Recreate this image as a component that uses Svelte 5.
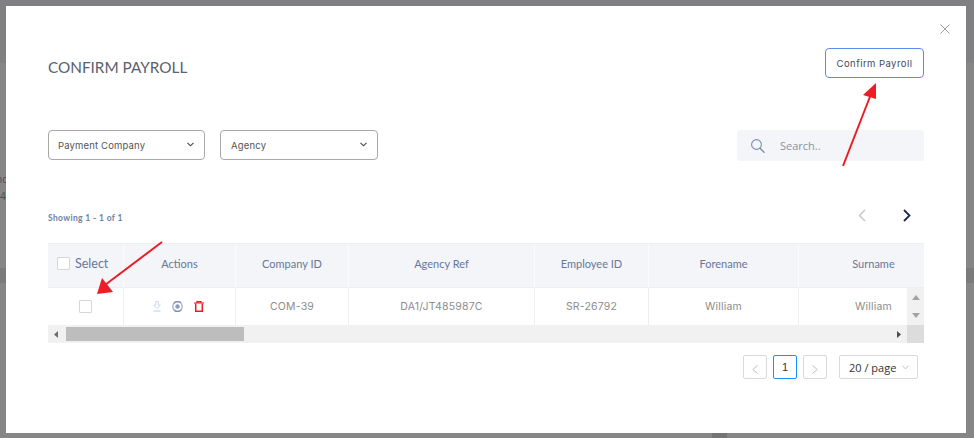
<script>
  const columns = [
    { label: 'Actions', width: 112 },
    { label: 'Company ID', width: 113, value: 'COM-39' },
    { label: 'Agency Ref', width: 186, value: 'DA1/JT485987C' },
    { label: 'Employee ID', width: 114, value: 'SR-26792' },
    { label: 'Forename', width: 150, value: 'William' },
    { label: 'Surname', width: 150, value: 'William' },
  ];
</script>

<div class="backdrop">
  <span class="peek one">nc</span>
  <span class="peek two">4</span>
  <i class="chip"></i>

  <div class="modal">
    <button class="close" aria-label="Close">
      <svg width="10" height="10" viewBox="0 0 10 10"><path d="M.5.5l9 9M9.500.5l-9 9" stroke="#9a9da3" fill="none" /></svg>
    </button>

    <header class="head">
      <h1>CONFIRM PAYROLL</h1>
      <button class="confirm">Confirm Payroll</button>
    </header>

    <div class="filters">
      <div class="select first">
        <span>Payment Company</span>
        <svg width="7" height="5" viewBox="0 0 7 5"><path d="M.5.8l3 3 3-3" stroke="#444" stroke-width="1.100" fill="none" /></svg>
      </div>
      <div class="select">
        <span>Agency</span>
        <svg width="7" height="5" viewBox="0 0 7 5"><path d="M.5.8l3 3 3-3" stroke="#444" stroke-width="1.100" fill="none" /></svg>
      </div>
      <div class="search">
        <svg width="14" height="14" viewBox="0 0 14 14"><circle cx="5.500" cy="5.500" r="4.900" stroke="#7d8fb0" stroke-width="1.100" fill="none" /><path d="M9 9.200l4.500 4.500" stroke="#7d8fb0" stroke-width="1.400" fill="none" /></svg>
        <span>Search..</span>
      </div>
    </div>

    <div class="showing">
      <span>Showing 1 - 1 of 1</span>
      <div class="nav">
        <svg width="8" height="13" viewBox="0 0 8 13"><path d="M7 1L1.500 6.500 7 12" stroke="#c3c8d0" stroke-width="1.500" fill="none" /></svg>
        <svg width="8" height="13" viewBox="0 0 8 13"><path d="M1 1l5.500 5.500L1 12" stroke="#1f2b45" stroke-width="1.800" fill="none" /></svg>
      </div>
    </div>

    <div class="table">
      <div class="row thead">
        <div class="cell select-col">
          <i class="check"></i>
          <span>Select</span>
        </div>
        {#each columns as c}
          <div class="cell" style="width: {c.width}px">{c.label}</div>
        {/each}
      </div>
      <div class="row tbody">
        <div class="cell select-col center"><i class="check"></i></div>
        {#each columns as c}
          <div class="cell" style="width: {c.width}px">
            {#if c.value}
              {c.value}
            {:else}
              <div class="actions">
                <svg width="8" height="11" viewBox="0 0 8 11">
                  <path d="M2.700 .5h2.600v3.500h2L4 7.500.7 4h2z" stroke="#cfd3e6" stroke-width=".9" fill="none" />
                  <path d="M.5 10h7" stroke="#cfd3e6" stroke-width="1.200" />
                </svg>
                <svg width="11" height="11" viewBox="0 0 11 11">
                  <circle cx="5.500" cy="5.500" r="4.700" stroke="#a4add0" stroke-width="1.300" fill="none" />
                  <path d="M1.500 2.500A5 5 0 0 1 9 1.800M9.500 8.500A5 5 0 0 1 2 9.200" stroke="#7f8cb5" stroke-width="1.200" fill="none" />
                  <circle cx="5.500" cy="5.500" r="2.200" fill="#8f9bc0" />
                </svg>
                <svg width="10" height="11" viewBox="0 0 10 11">
                  <path d="M0 2h10M3 1.700V.6h4v1.100" stroke="#f01a1f" stroke-width="1.200" fill="none" />
                  <path d="M1.700 2.500v7.800h6.600V2.500" stroke="#f01a1f" stroke-width="1.500" fill="none" />
                </svg>
              </div>
            {/if}
          </div>
        {/each}
        <div class="vbar">
          <svg width="8" height="5" viewBox="0 0 8 5"><path d="M0 5l4-5 4 5z" fill="#a3a3a3" /></svg>
          <svg width="8" height="5" viewBox="0 0 8 5"><path d="M0 0l4 5 4-5z" fill="#a3a3a3" /></svg>
        </div>
      </div>
      <div class="hbar">
        <svg class="arrow" width="4" height="7" viewBox="0 0 4 7"><path d="M4 0L0 3.500 4 7z" fill="#6e6e6e" /></svg>
        <div class="thumb"></div>
        <svg class="arrow right" width="4" height="7" viewBox="0 0 4 7"><path d="M0 0l4 3.500L0 7z" fill="#4d4d4d" /></svg>
        <div class="corner"></div>
      </div>
    </div>

    <div class="pager">
      <button class="page" aria-label="Previous">
        <svg width="6" height="9" viewBox="0 0 6 9"><path d="M5.500.5L.8 4.500l4.700 4" stroke="#bdbdbd" fill="none" /></svg>
      </button>
      <button class="page active">1</button>
      <button class="page" aria-label="Next">
        <svg width="6" height="9" viewBox="0 0 6 9"><path d="M.5.5l4.700 4-4.700 4" stroke="#bdbdbd" fill="none" /></svg>
      </button>
      <div class="size">
        <span>20 / page</span>
        <svg width="7" height="5" viewBox="0 0 7 5"><path d="M.5.500l3 3.500 3-3.500" stroke="#c4c4c4" fill="none" /></svg>
      </div>
    </div>

    <svg class="marks" width="960" height="427" viewBox="0 0 960 427">
      <path d="M837 160l28-72" stroke="#ee1c25" stroke-width="2" fill="none" />
      <path d="M870 77l-13 12 13 4z" fill="#ee1c25" />
      <path d="M156 236l-57 43" stroke="#ee1c25" stroke-width="2" fill="none" />
      <path d="M91 288l16-2-11-14z" fill="#ee1c25" />
    </svg>
  </div>
</div>

<style>
  :global(body) {
    margin: 0;
  }
  .backdrop {
    position: relative;
    width: 974px;
    height: 438px;
    overflow: hidden;
    background: linear-gradient(#808082 0, #808082 63px, #868686 63px, #868686 268px, #7b7b7d 268px, #7b7b7d 283px, #868686 283px);
    padding: 6px 8px 5px 6px;
    box-sizing: border-box;
    font-family: 'Open Sans', sans-serif;
  }
  .peek {
    position: absolute;
    left: -4px;
    font-size: 10px;
    color: #4a4a55;
  }
  .peek.one { top: 172px; }
  .peek.two { top: 189px; left: 0; }
  .chip {
    position: absolute;
    left: 712px;
    top: 433px;
    width: 15px;
    height: 5px;
    background: #757577;
  }
  .modal {
    position: relative;
    width: 960px;
    height: 427px;
    padding: 42px 42px 0;
    box-sizing: border-box;
    background: #fff;
  }
  button {
    font-family: inherit;
    padding: 0;
    background: #fff;
    cursor: pointer;
  }
  .close {
    position: absolute;
    top: 18px;
    right: 16px;
    display: flex;
    border: 0;
    background: none;
  }
  .head {
    display: flex;
    align-items: center;
    justify-content: space-between;
    height: 30px;
  }
  h1 {
    margin: 0;
    font-family: 'Lato', sans-serif;
    font-size: 15.300px;
    font-weight: 400;
    color: #5a6170;
    line-height: 30px;
    position: relative;
    top: 4px;
  }
  .confirm {
    width: 99px;
    height: 30px;
    border: 1px solid #5b8def;
    border-radius: 4px;
    font-family: 'Inter', sans-serif;
    font-size: 9.500px;
    letter-spacing: 0.45px;
    color: #444a55;
  }
  .filters {
    display: flex;
    margin-top: 52px;
    gap: 15px;
  }
  .select {
    display: flex;
    align-items: center;
    justify-content: space-between;
    width: 158px;
    height: 30px;
    padding: 0 10px;
    box-sizing: border-box;
    border: 1px solid #a8a8a8;
    border-radius: 4px;
    font-family: 'Inter', sans-serif;
    font-size: 9.500px;
    letter-spacing: 0.2px;
    color: #555;
  }
  .select.first {
    width: 157px;
    padding-left: 9px;
    letter-spacing: 0.15px;
  }
  .select svg {
    position: relative;
    top: -1px;
  }
  .search {
    display: flex;
    align-items: center;
    gap: 15px;
    width: 187px;
    height: 31px;
    margin-left: auto;
    padding-left: 14px;
    box-sizing: border-box;
    background: #f3f5f9;
    border-radius: 3px;
    font-size: 11px;
    color: #8b93a3;
  }
  .showing {
    display: flex;
    align-items: center;
    justify-content: space-between;
    height: 30px;
    margin-top: 39px;
    font-family: 'Lato', sans-serif;
    font-size: 8.500px;
    font-weight: 700;
    color: #6f7fa3;
    letter-spacing: 0.35px;
  }
  .showing > span {
    position: relative;
    top: 3px;
  }
  .nav {
    display: flex;
    gap: 37px;
    padding-right: 13px;
  }
  .table {
    margin-top: 13px;
    width: 876px;
    height: 100px;
    overflow: hidden;
  }
  .row {
    display: flex;
    position: relative;
    width: 876px;
  }
  .thead {
    height: 45px;
    background: #f3f5f9;
    border-top: 1px solid #edeef1;
    box-sizing: border-box;
    font-family: 'Lato', sans-serif;
    font-size: 11px;
    color: #66779a;
  }
  .tbody {
    height: 37px;
    background: #fff;
    font-family: 'Inter', sans-serif;
    font-size: 10.500px;
    letter-spacing: 0.2px;
    color: #8c8c8c;
  }
  .cell {
    flex: none;
    display: flex;
    align-items: center;
    justify-content: center;
    box-sizing: border-box;
    border-left: 1px solid #eceef2;
    padding-bottom: 0;
  }
  .thead .cell {
    border-left-color: #fbfbfd;
    border-bottom: 1px solid #eceef2;
    padding-bottom: 4px;
  }
  .cell.select-col {
    width: 75px;
    border-left: 0;
    gap: 5px;
    justify-content: flex-start;
    padding-left: 9px;
    font-size: 12.500px;
  }
  .cell.select-col.center {
    justify-content: center;
    padding-left: 0;
    padding-bottom: 1px;
  }
  .check {
    display: block;
    width: 11px;
    height: 11px;
    border: 1px solid #d6d6d6;
    border-radius: 1px;
    background: #fff;
  }
  .actions {
    display: flex;
    align-items: center;
    gap: 11px;
    margin-left: -3px;
  }
  .vbar {
    position: absolute;
    top: 0;
    right: 0;
    width: 17px;
    height: 37px;
    display: flex;
    flex-direction: column;
    align-items: center;
    justify-content: space-between;
    padding: 7px 0;
    box-sizing: border-box;
    background: #f1f1f1;
  }
  .hbar {
    position: relative;
    display: flex;
    align-items: center;
    height: 18px;
    background: #f1f1f1;
    padding-left: 6px;
  }
  .thumb {
    width: 178px;
    height: 14px;
    margin-left: 8px;
    background: #bdbdbd;
  }
  .arrow.right {
    margin-left: auto;
    margin-right: 23px;
  }
  .corner {
    position: absolute;
    top: 0;
    right: 0;
    width: 17px;
    height: 18px;
    background: #dcdcdc;
  }
  .pager {
    display: flex;
    margin-top: 12px;
    padding-left: 695px;
    gap: 6px;
  }
  .page {
    display: flex;
    align-items: center;
    justify-content: center;
    width: 24px;
    height: 24px;
    padding-top: 4px;
    box-sizing: border-box;
    border: 1px solid #d9d9d9;
    border-radius: 2px;
    font-size: 11px;
    color: #333;
  }
  .page.active {
    border-color: #1890ff;
    padding-top: 0;
    font-family: 'Liberation Sans', sans-serif;
  }
  .size {
    display: flex;
    align-items: center;
    justify-content: space-between;
    width: 79px;
    height: 24px;
    margin-left: 6px;
    padding: 0 8px 0 9px;
    box-sizing: border-box;
    border: 1px solid #d9d9d9;
    border-radius: 2px;
    font-size: 11px;
    color: #333;
  }
  .marks {
    position: absolute;
    left: 0;
    top: 0;
    pointer-events: none;
  }
</style>
